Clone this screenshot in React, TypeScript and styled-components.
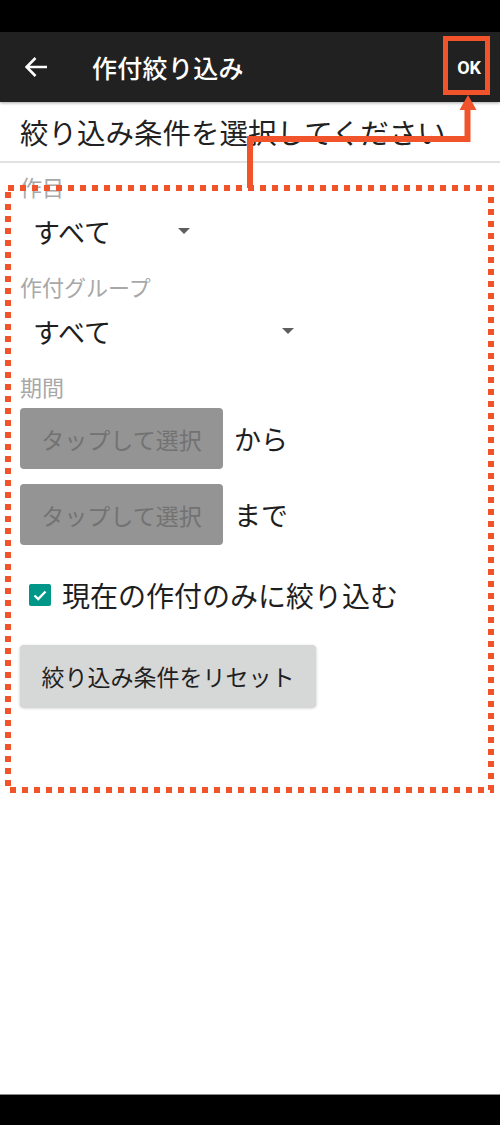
import React from "react";
import styled, { createGlobalStyle } from "styled-components";

const GlobalStyle = createGlobalStyle`
  html, body {
    margin: 0;
    padding: 0;
    background: #ffffff;
  }
  body {
    font-family: "Noto Sans CJK JP", "Noto Sans", Roboto, sans-serif;
  }
`;

const ORANGE = "#f1532a";

const Screen = styled.div`
  position: relative;
  width: 500px;
  height: 1125px;
  display: flex;
  flex-direction: column;
  overflow: hidden;
  background: #ffffff;
`;

const StatusBar = styled.div`
  height: 32px;
  background: #000000;
  flex-shrink: 0;
`;

const AppBar = styled.div`
  height: 70px;
  background: #212121;
  display: flex;
  align-items: center;
  padding: 0 19px 0 25px;
  flex-shrink: 0;
  box-shadow: 0 1px 3px rgba(0, 0, 0, 0.35);
  position: relative;
  z-index: 1;
`;

const BackIcon = styled.svg`
  width: 23px;
  height: 20px;
  flex-shrink: 0;
`;

const Title = styled.div`
  margin-left: 44px;
  color: #ffffff;
  font-size: 25px;
  font-weight: 500;
  letter-spacing: 0.3px;
  flex: 1;
`;

const OkButton = styled.div`
  color: #ffffff;
  font-family: Roboto, "Liberation Sans", sans-serif;
  font-weight: 700;
  font-size: 18px;
`;

const Subtitle = styled.div`
  height: 59px;
  display: flex;
  align-items: center;
  padding-left: 20px;
  font-size: 28.5px;
  color: #212121;
  flex-shrink: 0;
`;

const Divider = styled.div`
  height: 2px;
  background: #e2e2e2;
  flex-shrink: 0;
`;

const Content = styled.div`
  flex: 1;
  display: flex;
  flex-direction: column;
  padding: 12px 0 0 20px;
`;

const Field = styled.div`
  display: flex;
  flex-direction: column;
  margin-bottom: 20px;
`;

const Label = styled.div`
  height: 22px;
  line-height: 22px;
  font-size: 22px;
  color: #a8a8a8;
  margin-bottom: 10px;
`;

const Spinner = styled.div<{ $width: number }>`
  width: ${(p) => p.$width}px;
  height: 48px;
  display: flex;
  align-items: center;
  padding-left: 13px;
  box-sizing: border-box;
`;

const SpinnerText = styled.div`
  flex: 1;
  font-size: 27px;
  color: #1e1e1e;
`;

const Caret = styled.div`
  width: 0;
  height: 0;
  border-left: 6px solid transparent;
  border-right: 6px solid transparent;
  border-top: 6px solid #5e5e5e;
  margin-right: 10px;
`;

const PeriodBlock = styled.div`
  display: flex;
  flex-direction: column;
  gap: 15px;
  margin-top: 1px;
`;

const PeriodRow = styled.div`
  display: flex;
  align-items: center;
`;

const PickButton = styled.div`
  width: 203px;
  height: 61px;
  background: #949494;
  border-radius: 4px;
  display: flex;
  align-items: center;
  justify-content: center;
  font-size: 23px;
  color: #727272;
`;

const RangeText = styled.div`
  margin-left: 11px;
  font-size: 27px;
  color: #1e1e1e;
`;

const CheckRow = styled.label`
  display: flex;
  align-items: center;
  height: 40px;
  margin-top: 10px;
  padding-left: 9px;
`;

const CheckBox = styled.div`
  width: 22px;
  height: 22px;
  border-radius: 2px;
  background: #009688;
  display: flex;
  align-items: center;
  justify-content: center;
`;

const CheckText = styled.div`
  margin-left: 11px;
  font-size: 28px;
  color: #1e1e1e;
`;

const ResetButton = styled.div`
  width: 296px;
  height: 62px;
  margin-top: 30px;
  background: #d6d7d7;
  border-radius: 4px;
  box-shadow: 0 1px 3px rgba(0, 0, 0, 0.25);
  display: flex;
  align-items: center;
  justify-content: center;
  font-size: 23px;
  color: #1f1f1f;
`;

const NavBar = styled.div`
  height: 30px;
  background: #000000;
  border-top: 1px solid #8a8a8a;
  flex-shrink: 0;
`;

const Overlay = styled.svg`
  position: absolute;
  left: 0;
  top: 0;
  width: 500px;
  height: 1125px;
  pointer-events: none;
  z-index: 5;
`;

const Annotation = () => (
  <Overlay viewBox="0 0 500 1125">
    <rect x="445.5" y="38.5" width="42" height="54" fill="none" stroke={ORANGE} strokeWidth="5" />
    <polygon points="468,95 459.5,110 476.5,110" fill={ORANGE} />
    <path d="M250 188 V139 H467.5 V108" fill="none" stroke={ORANGE} strokeWidth="6" />
    <rect
      x="8"
      y="188"
      width="483"
      height="602"
      fill="none"
      stroke={ORANGE}
      strokeWidth="6"
      strokeDasharray="6 6"
    />
  </Overlay>
);

export default function App() {
  return (
    <Screen>
      <GlobalStyle />
      <StatusBar />
      <AppBar>
        <BackIcon viewBox="0 0 23 20">
          <path d="M1.5 10 H22 M10.5 1 L1.5 10 L10.5 19" fill="none" stroke="#ffffff" strokeWidth="2.6" />
        </BackIcon>
        <Title>作付絞り込み</Title>
        <OkButton>OK</OkButton>
      </AppBar>
      <Subtitle>絞り込み条件を選択してください</Subtitle>
      <Divider />
      <Content>
        <Field>
          <Label>作目</Label>
          <Spinner $width={180}>
            <SpinnerText>すべて</SpinnerText>
            <Caret />
          </Spinner>
        </Field>
        <Field>
          <Label>作付グループ</Label>
          <Spinner $width={284}>
            <SpinnerText>すべて</SpinnerText>
            <Caret />
          </Spinner>
        </Field>
        <Field>
          <Label>期間</Label>
          <PeriodBlock>
            <PeriodRow>
              <PickButton>タップして選択</PickButton>
              <RangeText>から</RangeText>
            </PeriodRow>
            <PeriodRow>
              <PickButton>タップして選択</PickButton>
              <RangeText>まで</RangeText>
            </PeriodRow>
          </PeriodBlock>
        </Field>
        <CheckRow>
          <CheckBox>
            <svg width="16" height="16" viewBox="0 0 16 16">
              <polyline points="2.5,8.5 6.2,12 13.5,4.5" fill="none" stroke="#ffffff" strokeWidth="2.4" />
            </svg>
          </CheckBox>
          <CheckText>現在の作付のみに絞り込む</CheckText>
        </CheckRow>
        <ResetButton>絞り込み条件をリセット</ResetButton>
      </Content>
      <NavBar />
      <Annotation />
    </Screen>
  );
}
